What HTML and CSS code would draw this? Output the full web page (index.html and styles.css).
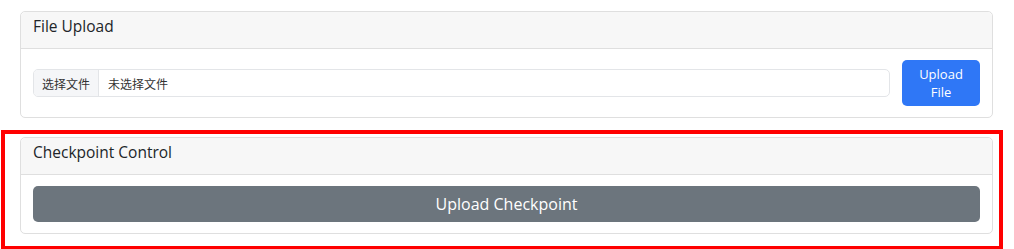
FILE: index.html
```html
<!DOCTYPE html>
<html lang="zh">
<head>
<meta charset="utf-8">
<title>Upload</title>
<link rel="stylesheet" href="styles.css">
</head>
<body>
<main class="page">
  <section class="card card-upload">
    <div class="card-header">File Upload</div>
    <div class="card-body upload-row">
      <label class="file-input">
        <span class="file-btn">选择文件</span>
        <span class="file-name">未选择文件</span>
      </label>
      <button class="btn btn-primary" type="button">Upload File</button>
    </div>
  </section>
  <section class="card card-checkpoint">
    <div class="card-header">Checkpoint Control</div>
    <div class="card-body">
      <button class="btn btn-secondary btn-block" type="button">Upload Checkpoint</button>
    </div>
    <div class="highlight"></div>
  </section>
</main>
</body>
</html>
```

FILE: styles.css
```css
* { box-sizing: border-box; }
html, body { margin: 0; padding: 0; background: #fff; }
body {
  font-family: "Open Sans", "Noto Sans CJK SC", sans-serif;
  color: #212529;
  width: 1014px;
  height: 249px;
  overflow: hidden;
}
.page {
  padding: 11px 21px 0 20px;
  display: flex;
  flex-direction: column;
  gap: 19px;
}
.card {
  border: 1px solid #dfdfdf;
  border-radius: 5px;
  background: #fff;
}
.card-checkpoint { position: relative; }
.card-header {
  background: #f7f7f7;
  border-bottom: 1px solid #dfdfdf;
  border-radius: 5px 5px 0 0;
  padding: 3px 12px 0;
  height: 37px;
  font-size: 15.5px;
  line-height: 22px;
}
.card-body { padding: 11px 12px; }
.upload-row {
  display: flex;
  align-items: center;
  gap: 12px;
}
.file-input {
  flex: 1;
  display: flex;
  height: 28px;
  border: 1px solid #e3e5e8;
  border-radius: 5px;
  overflow: hidden;
  font-size: 12px;
  font-family: "Noto Sans CJK SC", sans-serif;
  color: #333;
}
.file-btn {
  background: #f5f6f8;
  border-right: 1px solid #e3e5e8;
  padding: 0 8px;
  display: flex;
  align-items: center;
}
.file-name {
  padding: 0 9px;
  display: flex;
  align-items: center;
}
.btn {
  border: none;
  border-radius: 5px;
  color: #fff;
  font-family: "Open Sans", sans-serif;
  cursor: pointer;
}
.btn-primary {
  background: #2f77f6;
  width: 78px;
  height: 46px;
  font-size: 13px;
  line-height: 18px;
  padding: 5px 12px;
}
.btn-secondary {
  background: #6c757d;
}
.btn-block {
  display: block;
  width: 100%;
  height: 36px;
  font-size: 16px;
}
.highlight {
  position: absolute;
  left: -20px;
  top: -8px;
  width: 1002px;
  height: 120px;
  border: 4px solid #ff0000;
  pointer-events: none;
}
```
